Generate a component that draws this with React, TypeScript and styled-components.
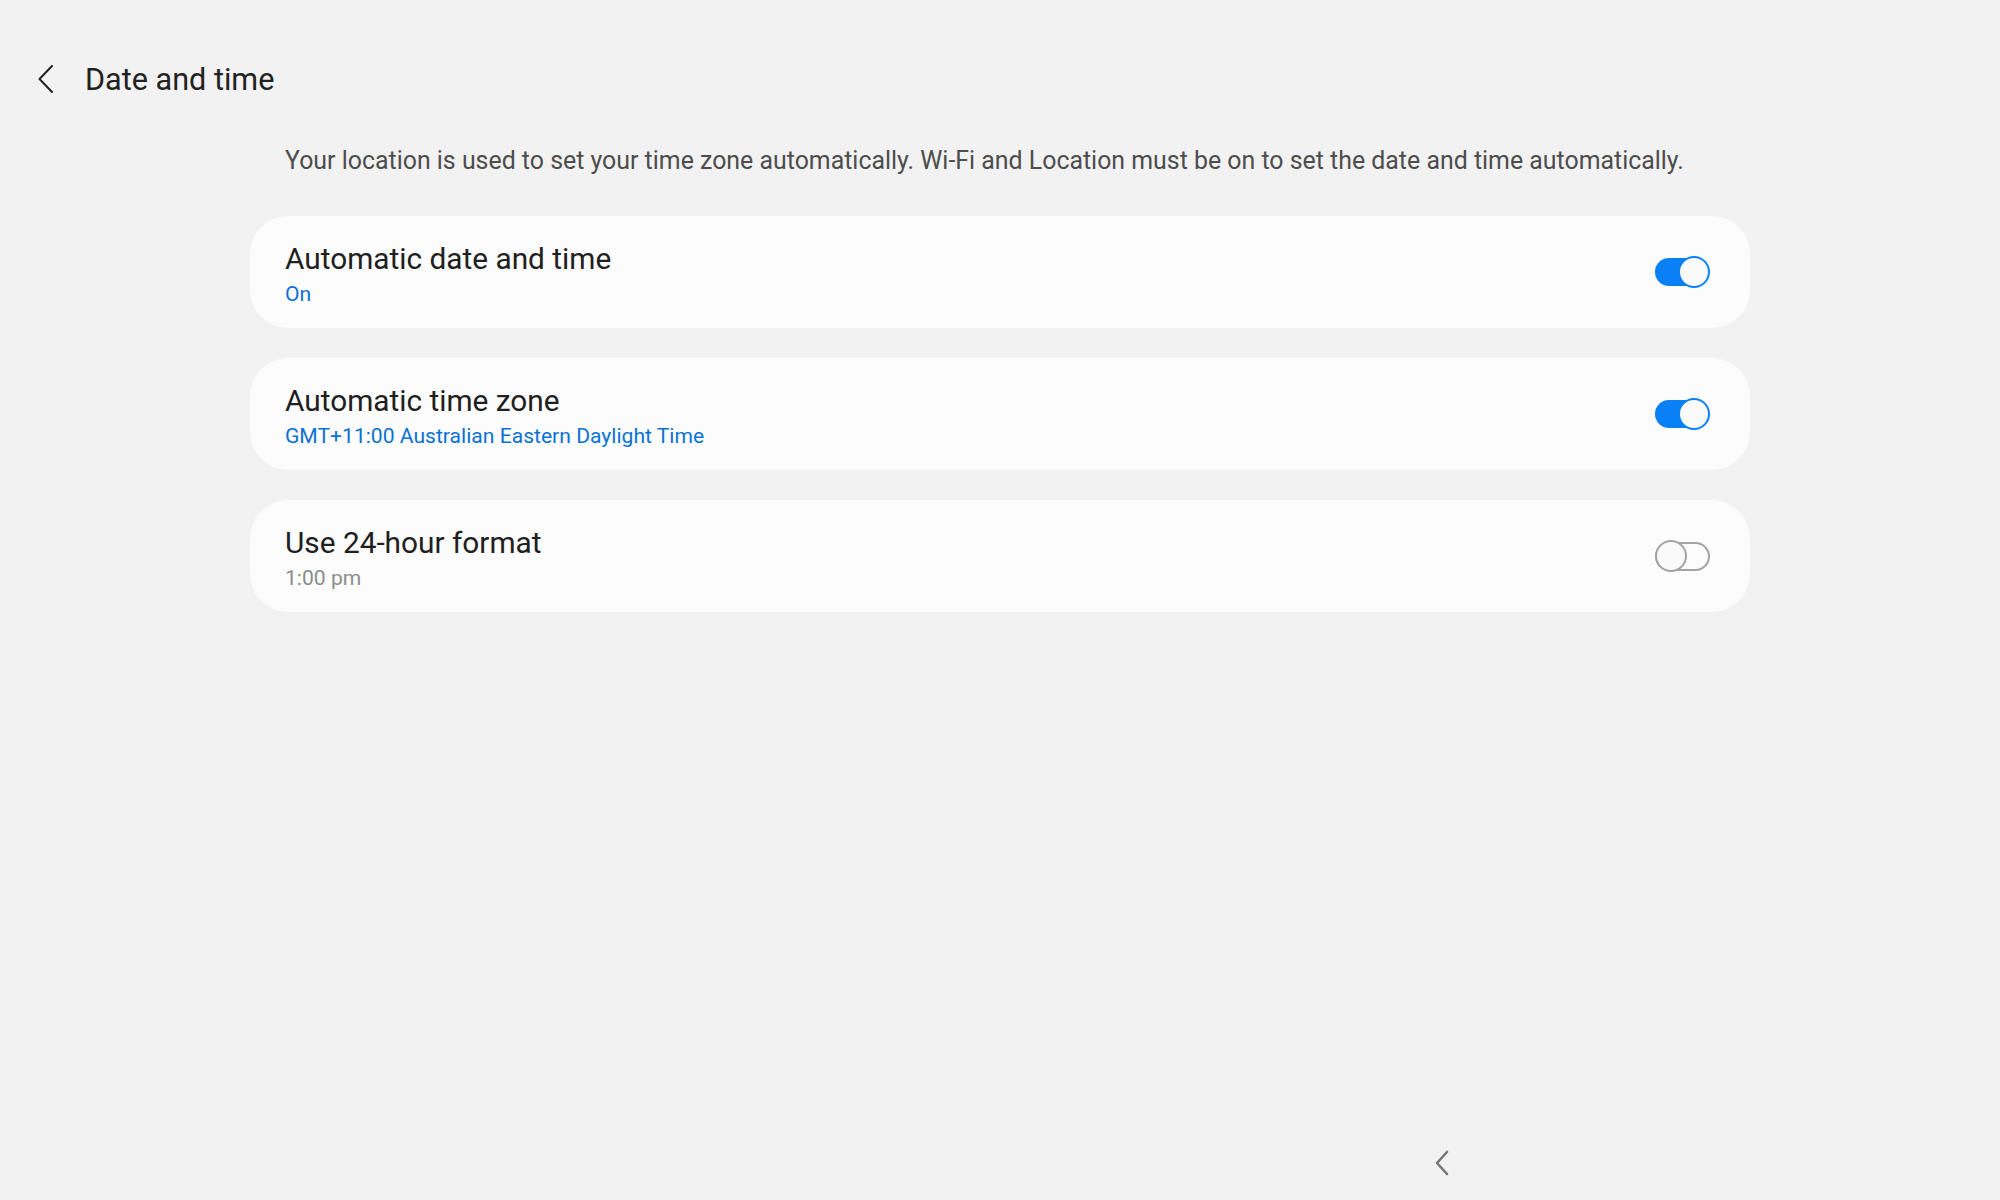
import React from "react";
import styled, { createGlobalStyle } from "styled-components";

const GlobalStyle = createGlobalStyle`
  html, body {
    margin: 0;
    padding: 0;
    background: #f2f2f2;
  }
  body {
    font-family: Roboto, "Noto Sans", sans-serif;
  }
`;

const Page = styled.div`
  width: 2000px;
  height: 1200px;
  display: flex;
  flex-direction: column;
  background: #f2f2f2;
  overflow: hidden;
`;

const Header = styled.div`
  display: flex;
  align-items: center;
  height: 78px;
  padding: 40px 0 0 37px;
  gap: 31px;
`;

const BackButton = styled.button`
  display: flex;
  align-items: center;
  justify-content: center;
  width: 17px;
  height: 30px;
  padding: 0;
  border: none;
  background: none;
  color: #222;
`;

const Title = styled.h1`
  margin: 0;
  font-size: 30.6px;
  font-weight: 400;
  color: #222;
`;

const Content = styled.div`
  width: 1500px;
  margin: 27px auto 0;
  display: flex;
  flex-direction: column;
  gap: 30px;
`;

const Description = styled.p`
  margin: 0 0 9px;
  padding-left: 35px;
  font-size: 24.9px;
  line-height: 32px;
  color: #4d4d4d;
  white-space: nowrap;
`;

const Card = styled.div`
  height: 112px;
  box-sizing: border-box;
  display: flex;
  align-items: center;
  justify-content: space-between;
  padding: 0 40px 0 35px;
  background: #fcfcfc;
  border-radius: 38px;
`;

const TextBlock = styled.div`
  display: flex;
  flex-direction: column;
  gap: 4px;
  padding-top: 3px;
`;

const ItemTitle = styled.div`
  font-size: 29.8px;
  line-height: 37px;
  color: #202020;
`;

const ItemSub = styled.div<{ $accent?: boolean }>`
  font-size: 21.1px;
  line-height: 26px;
  color: ${p => (p.$accent ? "#0a72d4" : "#8c8c8c")};
`;

const Toggle = styled.div`
  position: relative;
  width: 55px;
  height: 32px;
`;

const Track = styled.div<{ $on: boolean }>`
  position: absolute;
  top: ${p => (p.$on ? "2px" : "1.5px")};
  left: 0;
  width: ${p => (p.$on ? "48px" : "55px")};
  height: ${p => (p.$on ? "28px" : "29px")};
  box-sizing: border-box;
  border-radius: 15px;
  background: ${p => (p.$on ? "#0a80f7" : "transparent")};
  border: ${p => (p.$on ? "none" : "2px solid #a3a3a3")};
`;

const Thumb = styled.div<{ $on: boolean }>`
  position: absolute;
  top: 0;
  ${p => (p.$on ? "right: 0;" : "left: 0;")}
  width: 32px;
  height: 32px;
  box-sizing: border-box;
  border-radius: 50%;
  background: #fafafa;
  border: 2px solid ${p => (p.$on ? "#0a80f7" : "#a3a3a3")};
`;

const Spacer = styled.div`
  flex: 1;
`;

const NavBar = styled.div`
  height: 74px;
  display: flex;
  justify-content: center;
  align-items: center;
  gap: 400px;
`;

const NavButton = styled.div<{ $hidden?: boolean }>`
  width: 42px;
  height: 30px;
  display: flex;
  align-items: center;
  justify-content: center;
  color: #777;
  visibility: ${p => (p.$hidden ? "hidden" : "visible")};
`;

type Setting = {
  title: string;
  sub: string;
  accent: boolean;
  on: boolean;
};

const settings: Setting[] = [
  { title: "Automatic date and time", sub: "On", accent: true, on: true },
  {
    title: "Automatic time zone",
    sub: "GMT+11:00 Australian Eastern Daylight Time",
    accent: true,
    on: true,
  },
  { title: "Use 24-hour format", sub: "1:00 pm", accent: false, on: false },
];

function Switch({ on }: { on: boolean }) {
  return (
    <Toggle>
      <Track $on={on} />
      <Thumb $on={on} />
    </Toggle>
  );
}

export default function App() {
  return (
    <Page>
      <GlobalStyle />
      <Header>
        <BackButton>
          <svg width="17" height="30" viewBox="0 0 17 30" fill="none">
            <path d="M15 2 L2.5 15 L15 28" stroke="currentColor" strokeWidth="2" strokeLinecap="round" strokeLinejoin="round" />
          </svg>
        </BackButton>
        <Title>Date and time</Title>
      </Header>
      <Content>
        <Description>
          Your location is used to set your time zone automatically. Wi-Fi and Location must be on to set the date and
          time automatically.
        </Description>
        {settings.map(s => (
          <Card key={s.title}>
            <TextBlock>
              <ItemTitle>{s.title}</ItemTitle>
              <ItemSub $accent={s.accent}>{s.sub}</ItemSub>
            </TextBlock>
            <Switch on={s.on} />
          </Card>
        ))}
      </Content>
      <Spacer />
      <NavBar>
        <NavButton $hidden />
        <NavButton $hidden />
        <NavButton>
          <svg width="16" height="26" viewBox="0 0 16 26" fill="none">
            <path d="M13 2 L3 13 L13 24" stroke="currentColor" strokeWidth="2.6" strokeLinecap="round" strokeLinejoin="round" />
          </svg>
        </NavButton>
      </NavBar>
    </Page>
  );
}
